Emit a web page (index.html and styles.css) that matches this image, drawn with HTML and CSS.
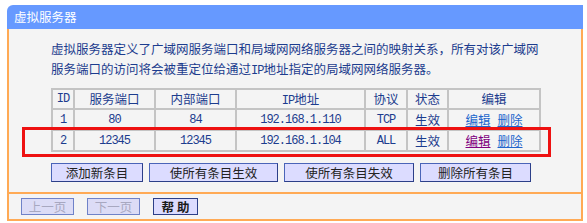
FILE: index.html
```html
<!DOCTYPE html>
<html lang="zh-CN">
<head>
<meta charset="utf-8">
<title>虚拟服务器</title>
<link rel="stylesheet" href="styles.css">
</head>
<body>
<div class="panel">
  <div class="title">虚拟服务器</div>
  <div class="content">
    <p class="desc">虚拟服务器定义了广域网服务端口和局域网网络服务器之间的映射关系，所有对该广域网<br>服务端口的访问将会被重定位给通过<span class="mono">IP</span>地址指定的局域网网络服务器。</p>
    <table class="grid">
      <colgroup>
        <col class="c-id"><col class="c-port"><col class="c-port"><col class="c-ip"><col class="c-proto"><col class="c-state"><col class="c-edit">
      </colgroup>
      <tr class="head">
        <td class="mono">ID</td><td>服务端口</td><td>内部端口</td><td><span class="mono">IP</span>地址</td><td>协议</td><td>状态</td><td>编辑</td>
      </tr>
      <tr class="row">
        <td class="mono">1</td><td class="mono">80</td><td class="mono">84</td><td class="mono">192.168.1.110</td><td class="mono">TCP</td><td>生效</td><td><a class="lnk" href="#">编辑</a><a class="lnk gap" href="#">删除</a></td>
      </tr>
      <tr class="row">
        <td class="mono">2</td><td class="mono">12345</td><td class="mono">12345</td><td class="mono">192.168.1.104</td><td class="mono">ALL</td><td>生效</td><td><a class="lnk visited" href="#">编辑</a><a class="lnk gap" href="#">删除</a></td>
      </tr>
    </table>
    <div class="actions">
      <button class="btn w1">添加新条目</button>
      <button class="btn w2">使所有条目生效</button>
      <button class="btn w3">使所有条目失效</button>
      <button class="btn w4">删除所有条目</button>
    </div>
  </div>
  <div class="footer">
    <button class="btn small disabled">上一页</button>
    <button class="btn small disabled">下一页</button>
    <button class="btn help">帮 助</button>
  </div>
  <div class="highlight"></div>
</div>
</body>
</html>
```
FILE: styles.css
```css
html, body {
  margin: 0;
  padding: 0;
  background: #ffffff;
}
body {
  font-family: "Noto Sans CJK SC", "Noto Sans", sans-serif;
}
.panel {
  position: relative;
  margin: 5px 0 0 7px;
  width: 576px;
}
.title {
  height: 24px;
  line-height: 24px;
  background: #6699ff;
  color: #ffffff;
  font-size: 12.5px;
  padding-left: 7px;
  border-radius: 6px 0 0 0;
}
.content {
  background: #f4f4f4;
  border-left: 2px solid #ffaa55;
  border-right: 2px solid #ffaa55;
  border-bottom: 2px solid #ffaa55;
  padding: 10px 0 10px 42px;
}
.desc {
  margin: 0;
  height: 40px;
  font-size: 12.5px;
  line-height: 20px;
  color: #1c3c8e;
}
.mono {
  font-family: "Liberation Mono", monospace;
}
.desc .mono {
  font-size: 12px;
  line-height: 1;
  letter-spacing: -1px;
}
.grid {
  margin-top: 9px;
  border-collapse: collapse;
  width: 488px;
  table-layout: fixed;
  border: 2px solid #c4c4c4;
  color: #1c3c8e;
}
.grid td {
  border: 2px solid #c4c4c4;
  text-align: center;
  padding: 0;
  font-size: 12.5px;
  line-height: 16px;
  white-space: nowrap;
  overflow: hidden;
}
.grid td.mono,
.grid td .mono {
  font-size: 12px;
  line-height: 1;
  letter-spacing: -1px;
}
.grid .head { height: 20px; }
.grid .row { height: 21px; }
.c-id { width: 22px; }
.c-port { width: 81px; }
.c-ip { width: 129px; }
.c-proto { width: 42px; }
.c-state { width: 41px; }
.c-edit { width: 92px; }
.lnk {
  color: #2266cc;
  text-decoration: underline;
}
.lnk.gap {
  margin-left: 7px;
}
.lnk.visited {
  color: #800080;
}
.actions {
  display: flex;
  gap: 6px;
  margin-top: 11px;
}
.btn {
  box-sizing: border-box;
  height: 19px;
  padding: 0;
  margin: 0;
  font-family: "Noto Sans CJK SC", "Noto Sans", sans-serif;
  font-size: 12.5px;
  line-height: 15px;
  color: #222222;
  background: #dcdcff;
  border: 1px solid #4a64b8;
  border-right-color: #2c3f88;
  border-bottom-color: #2c3f88;
}
.w1 { width: 92px; }
.w2 { width: 129px; }
.w3 { width: 130px; }
.w4 { width: 111px; }
.footer {
  display: flex;
  gap: 13px;
  background: #f4f4f4;
  border-left: 2px solid #ffaa55;
  border-right: 2px solid #ffaa55;
  border-bottom: 2px solid #ffaa55;
  padding: 4px 0 4px 12px;
}
.btn.small {
  width: 53px;
  height: 17px;
  line-height: 14px;
}
.btn.disabled {
  color: #a8a8c0;
  background: #dcdcf6;
  border-color: #6f82c8;
}
.btn.help {
  width: 45px;
  height: 17px;
  line-height: 14px;
  font-weight: bold;
  color: #1a1a1a;
  border-color: #2c3f88;
}
.highlight {
  position: absolute;
  left: 15px;
  top: 122px;
  width: 529px;
  height: 30px;
  box-sizing: border-box;
  border: 3px solid #ee1111;
  pointer-events: none;
}
```
